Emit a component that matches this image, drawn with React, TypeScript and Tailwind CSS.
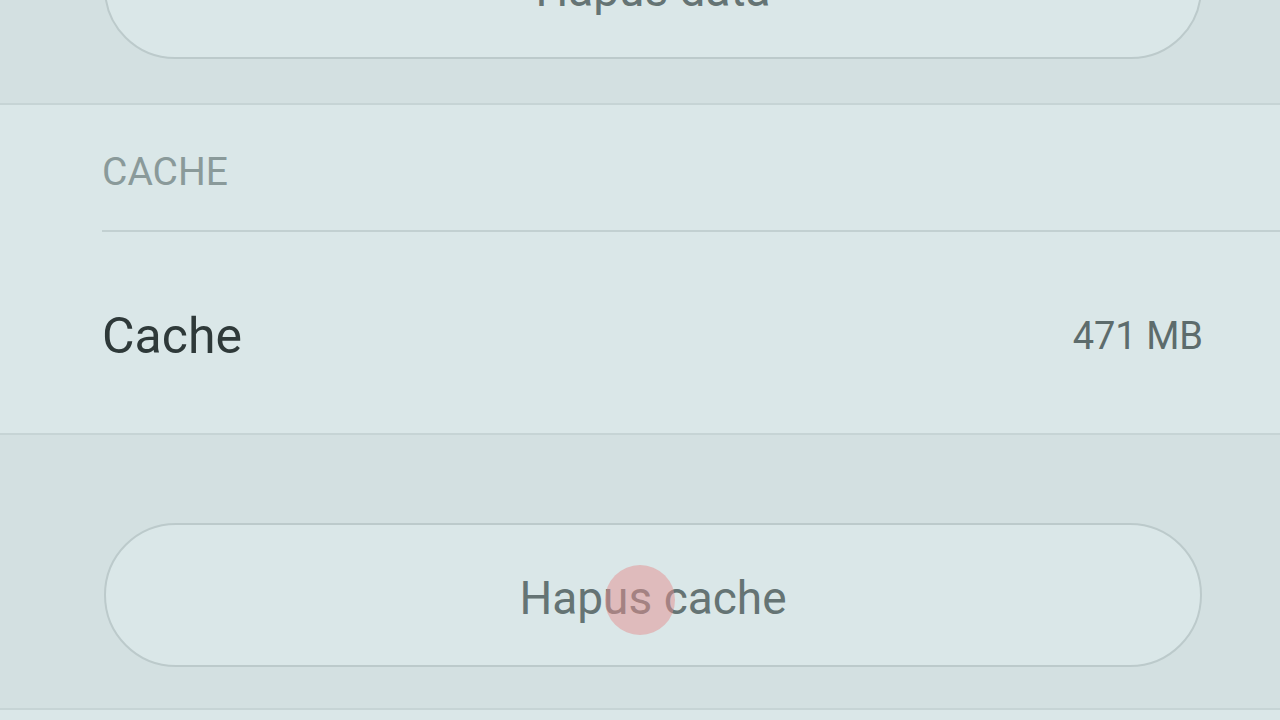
export default function App() {
  return (
    <div
      className="relative h-[720px] w-[1280px] overflow-hidden bg-[#d3e0e1]"
      style={{ fontFamily: "Roboto, 'Noto Sans', sans-serif" }}
    >
      <div className="-mt-[83px] pl-[104px] pr-[78px] pb-[44px]">
        <div className="flex h-[142px] items-center justify-center rounded-full border-2 border-[#bccacb] bg-[#dae7e8] pt-[4px] text-[46px] text-[#657474]">
          Hapus data
        </div>
      </div>

      <div className="border-y-2 border-[#c6d4d5] bg-[#dae7e8]">
        <div className="pl-[102px]">
          <div className="flex h-[127px] items-center border-b-2 border-[#c2d0d1] pt-[10px] text-[39px] text-[#8a9a9a]">
            CACHE
          </div>
          <div className="flex h-[201px] items-center justify-between pt-[8px] pr-[77px]">
            <span className="text-[50px] text-[#2e3939]">Cache</span>
            <span className="text-[38px] text-[#5d6c6c]">471 MB</span>
          </div>
        </div>
      </div>

      <div className="pl-[104px] pr-[78px] pt-[88px] pb-[41px]">
        <div className="relative flex h-[144px] items-center justify-center rounded-full border-2 border-[#bccacb] bg-[#dae7e8] text-[46px] text-[#657474]">
          <span className="relative pt-[6px]">Hapus cache</span>
          <div className="absolute left-[499px] top-[40px] h-[70px] w-[70px] rounded-full bg-[#e38f8f]/50" />
        </div>
      </div>

      <div className="h-[20px] border-t-2 border-[#c6d4d5] bg-[#dae7e8]" />
    </div>
  );
}
